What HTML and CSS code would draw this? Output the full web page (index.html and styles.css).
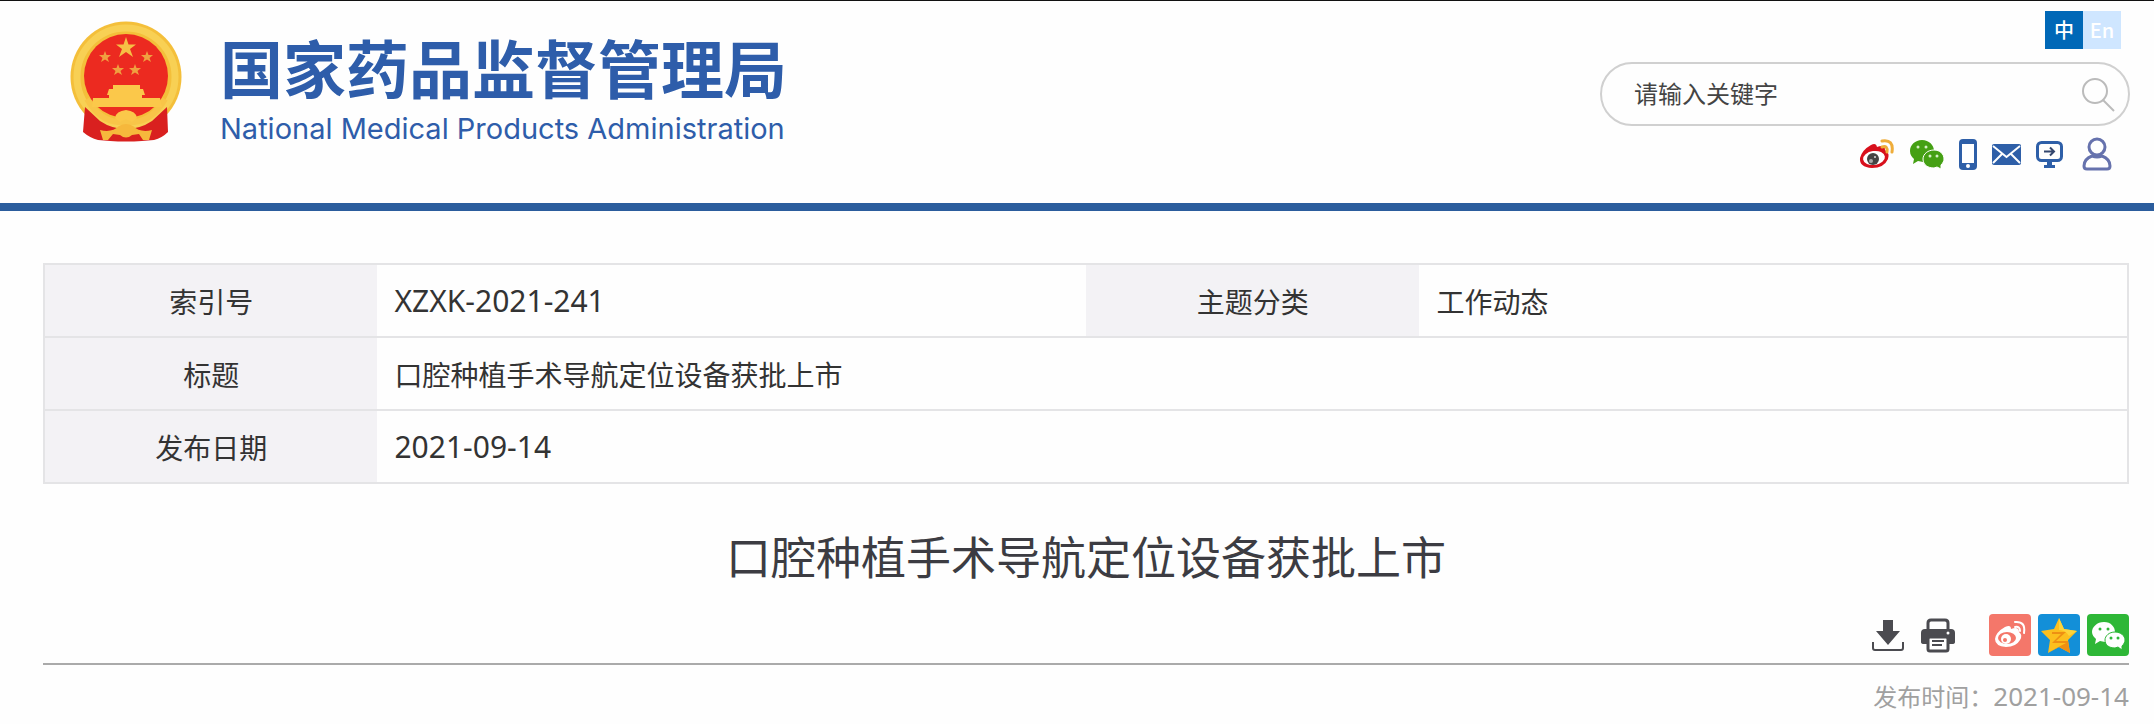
FILE: index.html
```
<!DOCTYPE html>
<html lang="zh-CN">
<head>
  <meta charset="UTF-8" />
  <meta name="viewport" content="width=device-width, initial-scale=1.0"/>
  <title>口腔种植手术导航定位设备获批上市</title>
  <link rel="stylesheet" href="styles.css">
</head>
<body>

  <!-- Header -->
  <header class="header">
    <a class="logo" href="#">
      <svg class="emblem" viewBox="0 0 112 121" aria-hidden="true">
        <circle cx="56" cy="56" r="55.500" fill="#f4bf3a"/>
        <circle cx="56" cy="56" r="49" fill="none" stroke="#f8d054" stroke-width="7"/>
        <path d="M15 86 L30 100 Q42 108 56 108 Q70 108 82 100 L97 86 L98 111 Q92 117 84 119 L72 120 Q56 121 40 120 L28 119 Q20 117 13 111 Z" fill="#d9201f"/>
        <circle cx="56" cy="55" r="42" fill="#ec2a20"/>
        <path d="M17 78 Q30 100 48 101 L64 101 Q82 100 95 78" fill="none" stroke="#f8c548" stroke-width="6"/>
        <path d="M56 16 L58.500 23.500 L66 23.500 L60 28 L63 36 L56 31 L49 36 L52 28 L46 23.500 L53.500 23.500 Z" fill="#f6bf45"/>
        <path id="star" d="M35 30 L36.500 34 L41 34 L37.500 37 L39 41 L35 38.500 L31 41 L32.500 37 L29 34 L33.500 34 Z" fill="#f0a040"/>
        <use href="#star" x="42"/>
        <use href="#star" x="13" y="13"/>
        <use href="#star" x="30" y="13"/>
        <path d="M43 64 H70 V68 H73 L75 74 H72 V77 H90 L92 86 H22 L23 77 H39 V74 H37 L39 68 H43 Z" fill="#fbc84a"/>
        <path d="M45 97 Q46 90 56 89 Q66 90 67 97 L62 101 Q56 96 50 101 Z" fill="#fbc84a"/>
        <path d="M30 109 Q42 112 49 105 Q56 101 63 105 Q70 112 82 109 L79 119 L73 119 L69 113 L62 114 Q56 119 50 114 L43 113 L38 119 L33 119 Z" fill="#f6b83c"/>
      </svg>
      <span class="logo-text">
        <span class="logo-cn">国家药品监督管理局</span>
        <span class="logo-en">National Medical Products Administration</span>
      </span>
    </a>

    <div class="tools">
      <nav class="lang">
        <a class="active" href="#">中</a>
        <a href="#">En</a>
      </nav>
      <form class="search">
        <input type="text" name="keyword" placeholder="请输入关键字" aria-label="请输入关键字" />
        <button type="submit" aria-label="搜索">
          <svg width="36" height="36" viewBox="0 0 36 36"><circle cx="15" cy="15" r="12" fill="none" stroke="#bbb" stroke-width="2"/><path d="M23 24 L34 35" stroke="#bbb" stroke-width="2"/></svg>
        </button>
      </form>
      <div class="quick">
        <a href="#" aria-label="微博">
          <svg width="36" height="30" viewBox="0 0 36 30">
            <path d="M12 6 Q17 3 18 8 Q26 5 26 11 Q31 14 29 20 Q25 29 13 29 Q0 28 1 19 Q3 11 12 6 Z" fill="#d8101c"/>
            <ellipse cx="15" cy="19" rx="11" ry="7" fill="#fff" transform="rotate(-8 15 19)"/>
            <circle cx="14" cy="20" r="6" fill="#444"/><circle cx="12" cy="22" r="2" fill="#aaa"/><circle cx="16" cy="18" r="1" fill="#ddd"/>
            <path d="M23 2 Q35 0 33 13" fill="none" stroke="#efad3a" stroke-width="3" stroke-linecap="round"/>
            <path d="M23 8 Q29 6 28 13" fill="none" stroke="#efad3a" stroke-width="3" stroke-linecap="round"/>
          </svg>
        </a>
        <a href="#" aria-label="微信">
          <svg width="34" height="30" viewBox="0 0 34 30">
            <path d="M12 1 C5 1 0 6 0 12 C0 16 2 18 4 20 L3 25 L8 22 L13 23 C20 23 24 18 24 12 C24 6 19 1 12 1 Z" fill="#45a014"/>
            <path d="M24 11 C18 11 13 15 13 20 C13 26 18 29 24 29 L27 28 L31 30 L31 26 C33 24 34 22 34 20 C34 15 30 11 24 11 Z" fill="#45a014" stroke="#fff" stroke-width="1"/>
            <circle cx="8" cy="8" r="1.500" fill="#d5efc5"/><circle cx="16" cy="8" r="1.500" fill="#d5efc5"/>
            <circle cx="20" cy="17" r="1.500" fill="#d5efc5"/><circle cx="27" cy="17" r="1.500" fill="#d5efc5"/>
          </svg>
        </a>
        <a href="#" aria-label="手机">
          <svg width="18" height="31" viewBox="0 0 18 31"><rect width="18" height="31" rx="4" fill="#2e5fa8"/><rect x="3" y="5" width="12" height="19" fill="#fff"/><circle cx="9" cy="27" r="2" fill="#fff"/></svg>
        </a>
        <a href="#" aria-label="邮箱">
          <svg width="29" height="21" viewBox="0 0 29 21"><rect width="29" height="21" rx="2" fill="#2e5fa8"/><path d="M1 2 L14.500 13 L28 2 M1 19 L10 10 M28 19 L19 10" fill="none" stroke="#fff" stroke-width="2"/></svg>
        </a>
        <a href="#" aria-label="网站">
          <svg width="27" height="27" viewBox="0 0 27 27"><rect x="1.500" y="1.500" width="24" height="18" rx="4" fill="none" stroke="#2e5fa8" stroke-width="3"/><path d="M11 20 H16 V24 H19 V27 H8 V24 H11 Z" fill="#2e5fa8"/><path d="M8 10.500 H18 M14 6.500 L18 10.500 L14 14.500" fill="none" stroke="#33466e" stroke-width="2"/></svg>
        </a>
        <a class="user" href="#" aria-label="个人中心">
          <svg width="30" height="34" viewBox="0 0 30 34"><circle cx="15" cy="10" r="8" fill="none" stroke="#6672ad" stroke-width="3"/><path d="M10 19 Q2 22 2 29 Q2 32 5 32 H25 Q28 32 28 29 Q28 22 20 19 Q15 21 10 19 Z" fill="none" stroke="#6672ad" stroke-width="3"/></svg>
        </a>
      </div>
    </div>
  </header>

  <main class="content">
    <!-- Index info -->
    <table class="info">
      <tr>
        <th scope="row">索引号</th>
        <td class="num">XZXK-2021-241</td>
        <th scope="row">主题分类</th>
        <td>工作动态</td>
      </tr>
      <tr>
        <th scope="row">标题</th>
        <td colspan="3">口腔种植手术导航定位设备获批上市</td>
      </tr>
      <tr>
        <th scope="row">发布日期</th>
        <td class="num" colspan="3">2021-09-14</td>
      </tr>
    </table>

    <h1>口腔种植手术导航定位设备获批上市</h1>

    <div class="actions">
      <button type="button" aria-label="下载">
        <svg width="32" height="33" viewBox="0 0 32 33"><path d="M11 1 H21 V12 H28 L16 26 L4 12 H11 Z" fill="#4b4b50"/><path d="M1 23 V29 Q1 31 3 31 H29 Q31 31 31 29 V23" fill="none" stroke="#4b4b50" stroke-width="2"/></svg>
      </button>
      <button type="button" aria-label="打印">
        <svg width="34" height="35" viewBox="0 0 34 35"><path d="M7 11 V5 Q7 2 10 2 H24 Q27 2 27 5 V11" fill="none" stroke="#4b4b50" stroke-width="3"/><path d="M4 11 H30 Q34 11 34 15 V24 Q34 26 31 26 H3 Q0 26 0 24 V15 Q0 11 4 11 Z" fill="#4b4b50"/><rect x="7" y="19" width="20" height="14" rx="2" fill="#fff" stroke="#4b4b50" stroke-width="3"/><path d="M11 23 H23 M11 27 H21" stroke="#4b4b50" stroke-width="2"/><circle cx="27" cy="15" r="1.500" fill="#fff"/></svg>
      </button>
      <div class="share">
        <a href="#" aria-label="分享到微博">
          <svg width="42" height="42" viewBox="0 0 42 42"><rect width="42" height="42" rx="4" fill="#f4776a"/>
            <path d="M16 13 Q22 10 22 15 Q30 12 30 18 Q34 21 31 26 Q27 33 17 33 Q6 32 6 25 Q7 18 16 13 Z" fill="#fff"/>
            <ellipse cx="18" cy="24" rx="9" ry="6" fill="#f4776a"/><circle cx="17" cy="25" r="5" fill="#fff"/><circle cx="16" cy="26" r="2" fill="#f4776a"/>
            <path d="M26 8 Q37 7 35 19 M26 13 Q31 12 31 17" fill="none" stroke="#fff" stroke-width="2" stroke-linecap="round"/></svg>
        </a>
        <a href="#" aria-label="分享到QQ空间">
          <svg width="42" height="42" viewBox="0 0 42 42"><rect width="42" height="42" rx="4" fill="#138fd8"/>
            <path d="M21 4 L26 15 L39 17 L30 26 L32 39 L21 33 L10 39 L12 26 L3 17 L16 15 Z" fill="#fcbf1e"/>
            <path d="M21 4 L26 15 L39 17 L31 22 Q28 16 21 16 Z" fill="#fdd43c"/>
            <path d="M14 18 H28 L18 27 H30 L32 39 L21 33 L10 39 Q20 33 28 29 H14 L23 20 H14 Z" fill="#ee9013"/></svg>
        </a>
        <a href="#" aria-label="分享到微信">
          <svg width="42" height="42" viewBox="0 0 42 42"><rect width="42" height="42" rx="4" fill="#2eb737"/>
            <path d="M17 8 C10 8 5 13 5 18 C5 21 7 23 9 25 L8 30 L13 27 L18 28 C24 28 28 23 28 18 C28 13 24 8 17 8 Z" fill="#fff"/>
            <path d="M28 18 C22 18 18 22 18 26 C18 31 22 34 28 34 L31 33 L35 36 L35 32 C37 30 38 28 38 26 C38 22 34 18 28 18 Z" fill="#fff" stroke="#2eb737" stroke-width="1"/>
            <circle cx="13" cy="15" r="1.500" fill="#2eb737"/><circle cx="21" cy="15" r="1.500" fill="#2eb737"/>
            <circle cx="24" cy="24" r="1.500" fill="#2eb737"/><circle cx="31" cy="24" r="1.500" fill="#2eb737"/></svg>
        </a>
      </div>
    </div>

    <p class="publish">发布时间：<time datetime="2021-09-14">2021-09-14</time></p>
  </main>

</body>
</html>
```

FILE: styles.css
```
* {
  box-sizing: border-box;
}

body {
  margin: 0;
  font-family: 'Noto Sans CJK SC', sans-serif;
  background-color: #fefefe;
  color: #333;
}

a {
  text-decoration: none;
}

svg {
  display: block;
}

/* Header */
.header {
  display: flex;
  justify-content: space-between;
  align-items: flex-start;
  padding: 10px 24px 32px 70px;
  border-top: 1px solid #111;
  border-bottom: 8px solid #2b5d9d;
}

.logo {
  display: flex;
  gap: 38px;
  padding-top: 10px;
  color: #2e5daa;
}

.emblem {
  width: 112px;
  height: 121px;
}

.logo-text {
  display: flex;
  flex-direction: column;
  padding-top: 14px;
}

.logo-cn {
  font-size: 63px;
  font-weight: 700;
  line-height: 62px;
}

.logo-en {
  font-family: Inter, sans-serif;
  font-size: 29px;
  line-height: 40px;
  padding-top: 12px;
}

.tools {
  display: flex;
  flex-direction: column;
  align-items: flex-end;
  width: 530px;
}

.lang {
  display: flex;
  margin-right: 9px;
}

.lang a {
  width: 38px;
  line-height: 38px;
  text-align: center;
  font-size: 20px;
  font-weight: 500;
  color: #fff;
  background-color: #cfe6ff;
}

.lang a.active {
  background-color: #0068b7;
}

.search {
  display: flex;
  align-items: center;
  width: 100%;
  height: 64px;
  margin-top: 13px;
  padding: 0 12px 0 32px;
  border: 2px solid #d0d0d0;
  border-radius: 32px;
}

.search input {
  flex: 1;
  min-width: 0;
  padding: 0 0 4px;
  border: none;
  outline: none;
  background: none;
  font-family: inherit;
  font-size: 24px;
}

.search input::placeholder {
  color: #444;
  opacity: 1;
}

.search button,
.actions button {
  padding: 0;
  border: none;
  background: none;
  cursor: pointer;
}

.quick {
  display: flex;
  align-items: center;
  gap: 15px;
  margin-top: 11px;
  padding-right: 18px;
}

.quick .user {
  margin-left: 4px;
}

/* Info table */
.content {
  padding: 52px 25px 0 43px;
}

.info {
  width: 100%;
  table-layout: fixed;
  border-collapse: collapse;
  border: 2px solid #e4e4e6;
  font-size: 28px;
  line-height: 40px;
}

.info th,
.info td {
  height: 73px;
  padding: 0 17px;
  border-bottom: 2px solid #e4e4e6;
}

.info th {
  width: 16%;
  font-weight: 400;
  background-color: #f3f2f5;
}

.info td {
  text-align: left;
}

.info .num {
  font-family: 'Noto Sans', sans-serif;
  font-size: 30px;
}

/* Article */
h1 {
  margin: 40px 0 0;
  text-align: center;
  font-size: 45px;
  font-weight: 400;
  line-height: 64px;
  color: #3c3c42;
}

.actions {
  display: flex;
  justify-content: flex-end;
  align-items: center;
  gap: 17px;
  padding-bottom: 7px;
  margin-top: 26px;
  border-bottom: 2px solid #aaa;
}

.share {
  display: flex;
  gap: 7px;
  margin-left: 17px;
}

.publish {
  margin: 11px 0 0;
  text-align: right;
  font-size: 24px;
  line-height: 40px;
  color: #a0a0a0;
}

.publish time {
  font-family: 'Noto Sans', sans-serif;
  font-size: 26px;
}
```
